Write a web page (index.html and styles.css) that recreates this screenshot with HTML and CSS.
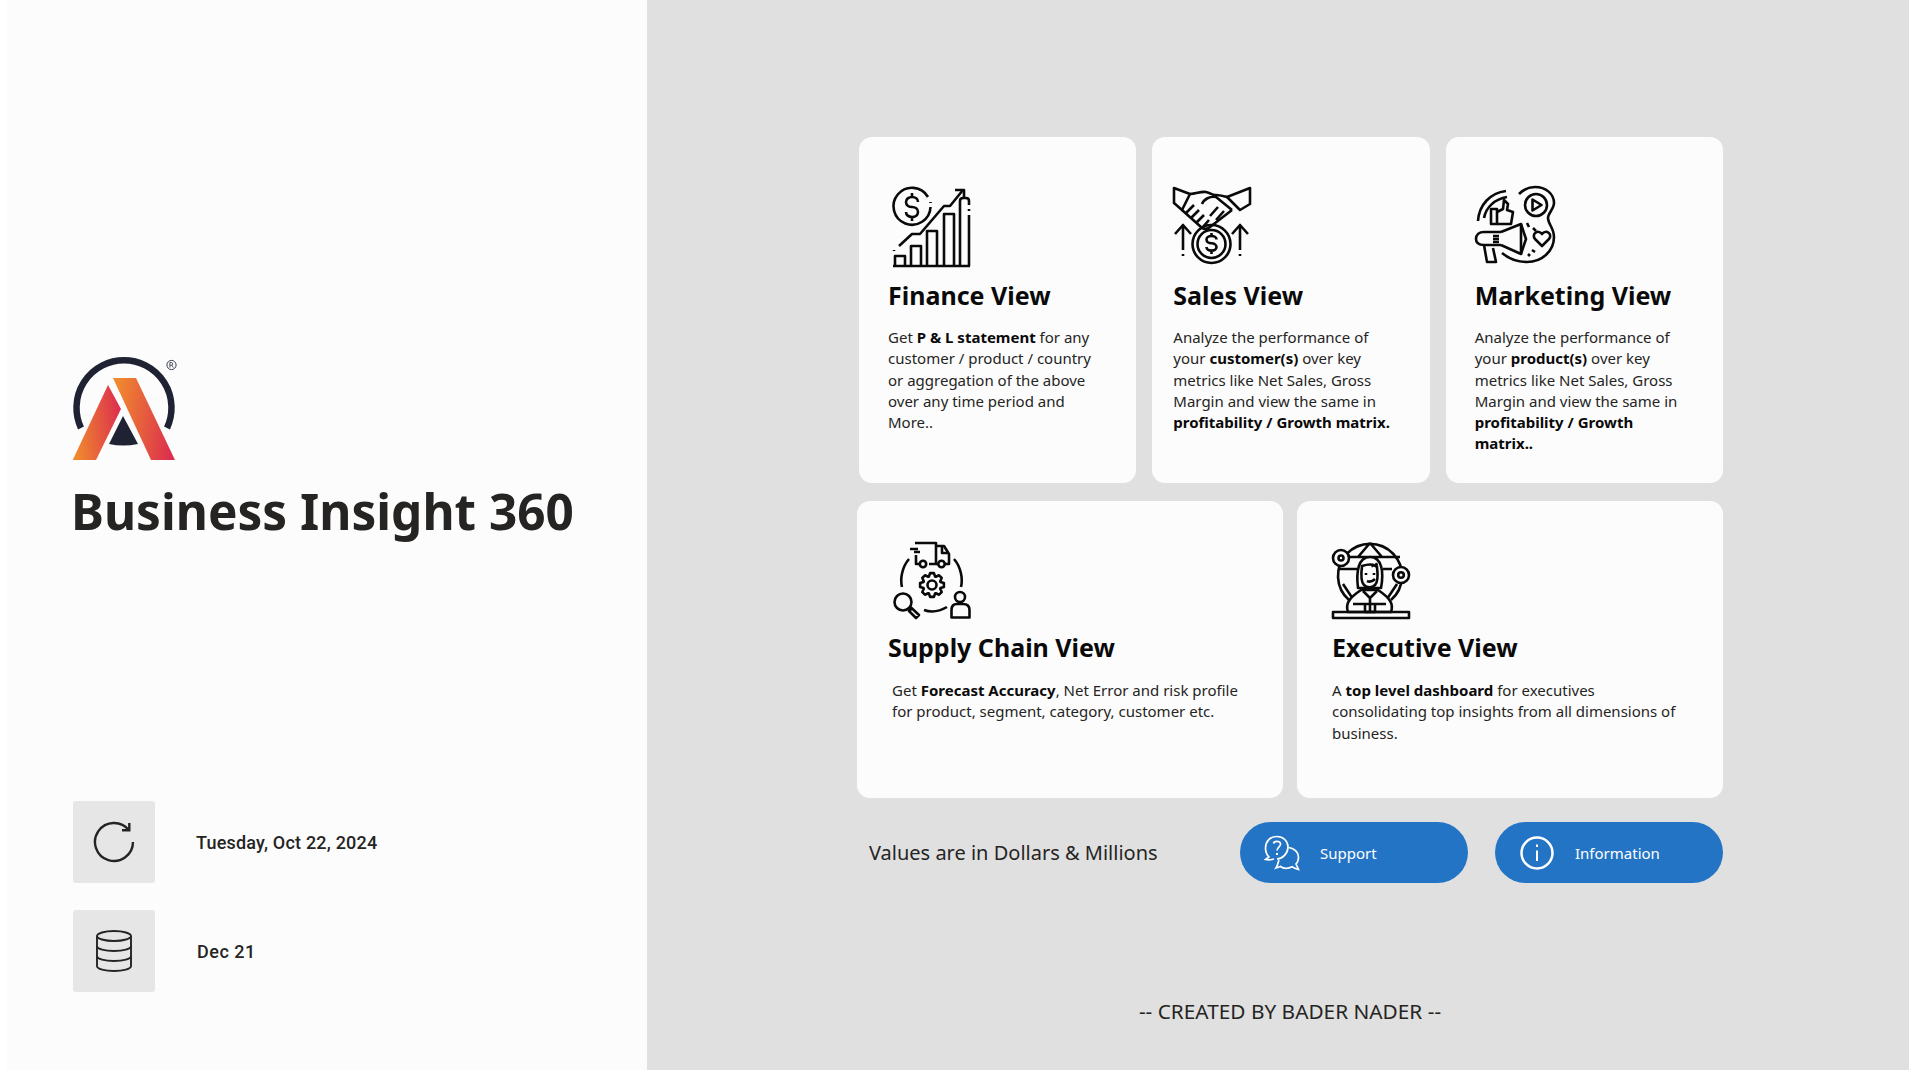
FILE: index.html
```html
<!DOCTYPE html>
<html lang="en">
<head>
    <meta charset="UTF-8">
    <title>Business Insight 360</title>
    <link rel="stylesheet" href="styles.css">
</head>
<body>
    <div class="canvas">
        <div class="side">
            <svg class="logo" viewBox="0 0 104 104">
                <defs>
                    <linearGradient id="legLeft" x1="0" y1="0.6" x2="1" y2="0.4">
                        <stop offset="0" stop-color="#f08a2e"/>
                        <stop offset="1" stop-color="#dc2f4e"/>
                    </linearGradient>
                    <linearGradient id="legRight" x1="0" y1="0.4" x2="1" y2="0.6">
                        <stop offset="0" stop-color="#f08a2e"/>
                        <stop offset="1" stop-color="#dc2f4e"/>
                    </linearGradient>
                </defs>
                <path d="M9 71A47.500 47.500 0 1 1 95 71" fill="none" stroke="#1f2233" stroke-width="6.500"/>
                <path d="M0.700 103L36 28L49 52L24 103Z" fill="url(#legLeft)"/>
                <path d="M41 21H64L103 103H79Z" fill="url(#legRight)"/>
                <path d="M51 59L66 87Q51 90 37 87Z" fill="#1f2233"/>
                <circle cx="99.500" cy="8" r="4.600" fill="none" stroke="#3a3d4a" stroke-width="1"/>
                <path d="M97.900 10.600V5.600H99.900A1.400 1.400 0 0 1 99.900 8.200H97.900M99.900 8.200L101.300 10.600" fill="none" stroke="#3a3d4a" stroke-width="0.900"/>
            </svg>
            <h1 class="report-title">Business Insight 360</h1>

            <div class="status-list">
                <div class="status-row">
                    <div class="tile">
                        <svg width="44" height="44" viewBox="0 0 44 44" fill="none" stroke="#252423" stroke-width="2.400">
                            <path d="M37 10.300A19 19 0 1 0 41 22"/>
                            <path d="M37.300 3V10.300H30"/>
                        </svg>
                    </div>
                    <span class="status-text">Tuesday, Oct 22, 2024</span>
                </div>
                <div class="status-row">
                    <div class="tile">
                        <svg width="38" height="44" viewBox="0 0 38 44" fill="none" stroke="#252423" stroke-width="1.900">
                            <ellipse cx="19" cy="7" rx="17" ry="5"/>
                            <path d="M2 7V37C2 40 10 42 19 42S36 40 36 37V7"/>
                            <path d="M2 17C2 20 10 22 19 22S36 20 36 17"/>
                            <path d="M2 27C2 30 10 32 19 32S36 30 36 27"/>
                        </svg>
                    </div>
                    <span class="status-text status-text-short">Dec 21</span>
                </div>
            </div>
        </div>

        <div class="main">
            <div class="card-row card-row-top">
                <div class="card card-finance">
                    <svg class="card-icon" viewBox="0 0 80 80">
                        <path d="M36 10A18.500 18.500 0 1 0 38.500 20"/>
                        <path d="M38.500 15v1"/>
                        <path d="M26 15c0-3-2.700-5-6-5s-6 2-6 5 2.700 5 6 5 6 2 6 5-2.700 5-6 5-6-2-6-5M20 6v4M20 30v4"/>
                        <path d="M1 79H78"/>
                        <path d="M3 79V69H13V79M19 79V59H29V79M35 79V44H45V79M52 79V27H62V79"/>
                        <path d="M68 79V14Q68 11 71 11H74Q77 11 77 14V18M77 22V24M77 28V79"/>
                        <path d="M2 63v1M7 59L20 47H28L52 19H58L71 3"/>
                        <path d="M63 3H72V11"/>
                    </svg>
                    <h2 class="card-title">Finance View</h2>
                    <p class="card-text">Get <b>P &amp; L statement</b> for any<br>customer / product / country<br>or aggregation of the above<br>over any time period and<br>More..</p>
                </div>
                <div class="card card-sales">
                    <svg class="card-icon" viewBox="0 0 80 80">
                        <path d="M1 1L17 7L9 23L1 16Z"/>
                        <path d="M77 1V17L67 23L54 10Z"/>
                        <path d="M17 7C23 7 28 4 33 5C38 6 40 9 43 8C47 8 50 9 54 10"/>
                        <path d="M29 17C31 12 37 9 43 10L59 23"/>
                        <path d="M9 23L28 40C31 43 35 42 37 40L59 23"/>
                        <path d="M21 18L13 26M26 23L18 31M31 28L23 36M36 33L29 41"/>
                        <path d="M45 20L37 29M51 24L43 33"/>
                        <circle cx="38.500" cy="57" r="19"/>
                        <circle cx="38.500" cy="57" r="14"/>
                        <path d="M43.500 52.500c0-2-2-3.500-5-3.500s-5 1.500-5 3.500 2 3.800 5 3.800 5 1.800 5 3.800-2 3.500-5 3.500-5-1.500-5-3.500M38.500 46v3M38.500 64v3"/>
                        <path d="M10 38V63M10 67v2M2 47L10 38L18 47"/>
                        <path d="M67 38V63M67 67v2M59 47L67 38L75 47"/>
                    </svg>
                    <h2 class="card-title">Sales View</h2>
                    <p class="card-text">Analyze the performance of<br>your <b>customer(s)</b> over key<br>metrics like Net Sales, Gross<br>Margin and view the same in<br><b>profitability / Growth matrix.</b></p>
                </div>
                <div class="card card-marketing">
                    <svg class="card-icon" viewBox="0 0 80 80">
                        <path d="M44 7C49 2 54 0 60 0C71 0 79 7 79 16C79 22 73 26 73 31C73 37 79 41 79 50C79 64 67 75 52 75C41 75 33 71 27 66"/>
                        <path d="M31 4C15 6 4 18 3 34M32 10C20 12 11 20 9 31"/>
                        <circle cx="61" cy="18" r="11"/>
                        <path d="M57.500 12.500L66.500 18L57.500 23.500Z"/>
                        <path d="M16 22H22V37H16Z"/>
                        <path d="M22 25L28 22L29 13L33 17L32 23L38 25L36 37H22"/>
                        <path d="M26 45L46 37V67L26 58"/>
                        <path d="M46 37L51 52L46 67"/>
                        <path d="M26 45H9C4 45 1 48 1 52S4 58 9 58H26"/>
                        <path d="M9 58L12 75H21L18 61"/>
                        <path d="M18 49H24M18 52H24M18 55H24"/>
                        <path d="M67 59L60 52C56 47 63 42 67 47C71 42 78 47 74 52Z"/>
                        <path d="M52 36L54 40M58 41L61 44M53 67L55 69M57 63L60 65"/>
                    </svg>
                    <h2 class="card-title">Marketing View</h2>
                    <p class="card-text">Analyze the performance of<br>your <b>product(s)</b> over key<br>metrics like Net Sales, Gross<br>Margin and view the same in<br><b>profitability / Growth<br>matrix..</b></p>
                </div>
            </div>

            <div class="card-row">
                <div class="card card-low card-supply">
                    <svg class="card-icon" viewBox="0 0 78 78">
                        <path d="M22 1H43V22H36M27 22H23V13"/>
                        <path d="M17 7H25M21 10H27"/>
                        <path d="M43 4H51L56 12V22H52M45 22H43"/>
                        <path d="M49 4V11H56"/>
                        <circle cx="30" cy="22" r="3.200"/>
                        <circle cx="48.500" cy="22" r="3.200"/>
                        <path d="M16 17C9 25 7 37 9 45"/>
                        <path d="M61 17C68 25 70 37 68 45"/>
                        <path d="M31 68Q42 72 54 65"/>
                        <polygon transform="translate(39 43)" points="8.500,-3.100 11.900,-1.900 11.900,1.900 8.500,3.100 8.200,3.800 9.700,7.050 7.050,9.700 3.800,8.200 3.100,8.500 1.900,11.900 -1.900,11.900 -3.100,8.500 -3.800,8.200 -7.050,9.700 -9.700,7.050 -8.200,3.800 -8.500,3.100 -11.900,1.900 -11.900,-1.900 -8.500,-3.100 -8.200,-3.800 -9.700,-7.050 -7.050,-9.700 -3.800,-8.200 -3.100,-8.500 -1.900,-11.900 1.900,-11.900 3.100,-8.500 3.800,-8.200 7.050,-9.700 9.700,-7.050 8.200,-3.800"/>
                        <circle cx="39" cy="43" r="4.500"/>
                        <circle cx="10" cy="60" r="8.500"/>
                        <path d="M16.500 66L19 68M18.500 66L26 73L23 76L16 69Z"/>
                        <circle cx="67" cy="55" r="5"/>
                        <path d="M58.500 75.500V68Q58.500 62 64 62H70Q76.500 62 76.500 68V75.500Z"/>
                    </svg>
                    <h2 class="card-title">Supply Chain View</h2>
                    <p class="card-text">Get <b>Forecast Accuracy</b>, Net Error and risk profile<br>for product, segment, category, customer etc.</p>
                </div>
                <div class="card card-low card-executive">
                    <svg class="card-icon" viewBox="0 0 78 78">
                        <path d="M17 58A32 32 0 1 1 59 58"/>
                        <path d="M38 1L26 15M38 1L50 15M8 15H68M7 27H25M51 27H60"/>
                        <path d="M11 42L21 57M65 42L55 57"/>
                        <circle class="filled" cx="9" cy="16" r="8"/>
                        <circle cx="9" cy="16" r="2.500"/>
                        <circle class="filled" cx="69" cy="33" r="8"/>
                        <circle cx="69" cy="33" r="2.800"/>
                        <path class="filled" d="M16 70C13 62 17 56 29 48H46C58 56 62 62 59 70Z"/>
                        <path d="M21 62H54M38 56V70M33 62V70H43V62M31 49L38 56L45 49"/>
                        <path class="filled" d="M26 46C24 30 26 15 38 15C50 15 52 30 49 46Z"/>
                        <path class="filled" d="M30 24C36 22 42 22 45 25C46 33 46 40 43 43C40 46 35 46 32 43C29 40 29 32 30 24Z"/>
                        <path d="M34 31v2M42 31v2M35 39Q39 41 43 37M40 22L41 25M44 21L45 24"/>
                        <path d="M1 70H77V76H1Z"/>
                    </svg>
                    <h2 class="card-title">Executive View</h2>
                    <p class="card-text">A <b>top level dashboard</b> for executives<br>consolidating top insights from all dimensions of<br>business.</p>
                </div>
            </div>

            <div class="action-row">
                <span class="values-note">Values are in Dollars &amp; Millions</span>
                <div class="action-buttons">
                    <button class="action-btn">
                        <svg width="36" height="36" viewBox="0 0 36 36" fill="none" stroke="#fff" stroke-width="1.700">
                            <path d="M13 1.500C6 1.500 1.500 6.500 1.500 13C1.500 17 3 20 5 22L1.500 24.500C4.500 25 7.500 24.800 10 24"/>
                            <path d="M13 1.500C19 1.500 24 6 24 12C24 18 19 23.500 13 24"/>
                            <path d="M25 12.500C30.500 13.500 34.500 17.500 34.500 22C34.500 25 33.500 27.500 32 29L34.500 34.500C32 34 30 33 28 31.800C24.500 34 19.500 34 16.500 31.500L12 33C14 30 14 27 15 25"/>
                            <path d="M9.500 8.500C10 6 15.500 5.500 16.500 8.500C17.500 11.500 13 12 13 15.500"/>
                            <path d="M13 18v2" stroke-width="2"/>
                        </svg>
                        <span>Support</span>
                    </button>
                    <button class="action-btn">
                        <svg width="36" height="36" viewBox="0 0 36 36" fill="none" stroke="#fff" stroke-width="2.500">
                            <circle cx="18" cy="18" r="15.500"/>
                            <path d="M18 15.500V26M18 9.500v2.500" stroke-width="2"/>
                        </svg>
                        <span>Information</span>
                    </button>
                </div>
            </div>

            <div class="credit">-- CREATED BY BADER NADER --</div>
        </div>
    </div>
</body>
</html>
```

FILE: styles.css
```css
body {
    margin: 0;
    background-color: #fff;
    font-family: "Noto Sans", "Open Sans", sans-serif;
    color: #252423;
}

.canvas {
    display: flex;
    width: 1902px;
    height: 1070px;
    margin-left: 7px;
    overflow: hidden;
}

/* left panel */
.side {
    width: 575px;
    padding: 357px 0 0 65px;
    background-color: #fcfcfc;
}

.logo {
    display: block;
    width: 104px;
    height: 104px;
    overflow: visible;
}

.report-title {
    margin: 20px 0 0 -1px;
    font-size: 49.5px;
    line-height: 60px;
    font-weight: 700;
    white-space: nowrap;
}

.status-list {
    display: flex;
    flex-direction: column;
    gap: 27px;
    margin-top: 260px;
    margin-left: 1px;
}

.status-row {
    display: flex;
    align-items: center;
    gap: 41px;
}

.tile {
    display: flex;
    align-items: center;
    justify-content: center;
    width: 82px;
    height: 82px;
    background-color: #e6e6e6;
    border-radius: 3px;
}

.status-text {
    font-family: Roboto, sans-serif;
    font-size: 18px;
    font-weight: 500;
    letter-spacing: 0.2px;
}

.status-text-short {
    margin-left: 1px;
    letter-spacing: 0.5px;
}

/* right panel */
.main {
    flex: 1;
    box-sizing: border-box;
    padding: 137px 0 0 210px;
    background-color: #e0e0e0;
}

.card-row {
    display: grid;
    grid-template-columns: 426px 426px;
    gap: 14px;
    width: 866px;
}

.card-row-top {
    grid-template-columns: 277.33px 277.33px 277.33px;
    gap: 16px;
    width: 864px;
    margin-left: 2px;
    margin-bottom: 18px;
}

.card {
    box-sizing: border-box;
    height: 346px;
    padding-top: 50px;
    background-color: #fcfcfc;
    border-radius: 13px;
}

.card-low {
    height: 297px;
    padding-top: 41px;
}

.card-finance { padding-left: 29px; }
.card-sales { padding-left: 21px; }
.card-marketing { padding-left: 29px; }
.card-supply { padding-left: 31px; }
.card-executive { padding-left: 35px; }

.card-icon {
    display: block;
    width: 80px;
    height: 80px;
    overflow: visible;
    fill: none;
    stroke: #0a0a0a;
    stroke-width: 2.6;
    stroke-linejoin: round;
}

.card-low .card-icon {
    width: 78px;
    height: 78px;
}

.card-icon .filled {
    fill: #fcfcfc;
}

.card-finance .card-icon { margin-left: 4px; }
.card-supply .card-icon { margin-left: 5px; }
.card-supply .card-text { margin-left: 4px; }

.card-title {
    margin: 10px 0 0;
    font-size: 25px;
    line-height: 36px;
    font-weight: 700;
    color: #0a0a0a;
    white-space: nowrap;
}

.card-low .card-title {
    margin-top: 9px;
}

.card-text {
    margin: 14px 0 0;
    font-size: 15px;
    line-height: 21.3px;
    white-space: nowrap;
}

.card-low .card-text {
    margin-top: 15px;
}

.card-text b {
    color: #0a0a0a;
}

.action-row {
    display: flex;
    align-items: center;
    justify-content: space-between;
    width: 866px;
    margin-top: 24px;
    box-sizing: border-box;
    padding-left: 12px;
}

.values-note {
    font-size: 20px;
}

.action-buttons {
    display: flex;
    gap: 27px;
}

.action-btn {
    display: flex;
    align-items: center;
    gap: 20px;
    width: 228px;
    height: 61px;
    padding: 0 0 0 24px;
    border: 0;
    border-radius: 31px;
    background-color: #2374c4;
    color: #fff;
    font-family: inherit;
    font-size: 15px;
}

.action-btn span {
    padding-top: 1px;
}

.credit {
    width: 866px;
    margin-top: 114px;
    font-size: 20.8px;
    line-height: 28px;
    text-align: center;
}
```
